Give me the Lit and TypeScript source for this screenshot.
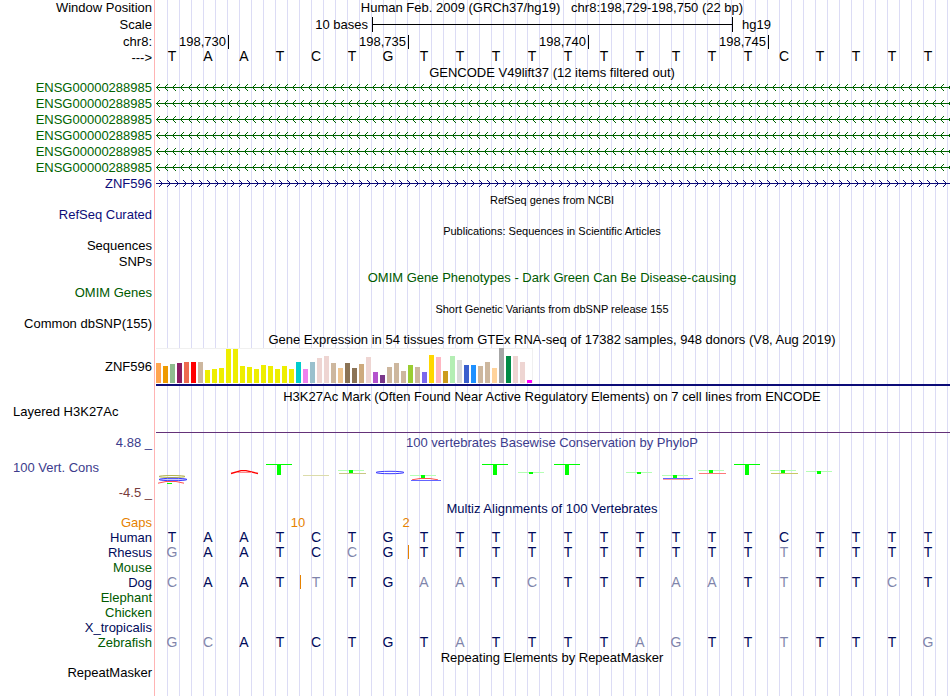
import { LitElement, html, css, svg, nothing } from 'lit';
import { customElement, property } from 'lit/decorators.js';
import { classMap } from 'lit/directives/class-map.js';

const HUMAN = 'TAATCTGTTTTTTTTTTCTTTT';

// lower case means the base differs from human
const SPECIES = [
  { name: 'Human', tone: 'navy', bases: HUMAN, gap: -1 },
  { name: 'Rhesus', tone: 'navy', bases: 'gAATCcGTTTTTTTTTTtTTTT', gap: 7 },
  { name: 'Mouse', tone: 'forest', bases: '', gap: -1 },
  { name: 'Dog', tone: 'navy', bases: 'cAATtTGaaTcTTTaaTtTTcT', gap: 4 },
  { name: 'Elephant', tone: 'forest', bases: '', gap: -1 },
  { name: 'Chicken', tone: 'forest', bases: '', gap: -1 },
  { name: 'X_tropicalis', tone: 'navy', bases: '', gap: -1 },
  { name: 'Zebrafish', tone: 'forest', bases: 'gcATCTGTaTTTTagTTtTTTg', gap: -1 },
];

const TISSUES: [string, number][] = [
  ['#ffa54f', 20], ['#ee9a00', 17], ['#8fbc8f', 19], ['#8b1c62', 20],
  ['#ee6a50', 21], ['#ff0000', 21], ['#cdb79e', 21], ['#eeee00', 13],
  ['#eeee00', 14], ['#eeee00', 15], ['#eeee00', 34], ['#eeee00', 34],
  ['#eeee00', 17], ['#eeee00', 16], ['#eeee00', 14], ['#eeee00', 18],
  ['#eeee00', 17], ['#eeee00', 14], ['#eeee00', 17], ['#eeee00', 14],
  ['#00cdcd', 21], ['#ee82ee', 14], ['#9ac0cd', 21], ['#eed5d2', 25],
  ['#eed5d2', 27], ['#cdb79e', 20], ['#eec591', 15], ['#8b7355', 20],
  ['#8b7355', 15], ['#cdaa7d', 19], ['#eed5d2', 26], ['#b452cd', 11],
  ['#7a378b', 8], ['#cdb79e', 16], ['#cdb79e', 20], ['#cdb79e', 12],
  ['#9acd32', 18], ['#cdb79e', 16], ['#7b68ee', 11], ['#ffd700', 28],
  ['#ffb6c1', 26], ['#cd9b1d', 12], ['#b4eeb4', 27], ['#d9d9d9', 23],
  ['#3a5fcd', 18], ['#1e90ff', 18], ['#cdb79e', 17], ['#cdb79e', 21],
  ['#ffd39b', 15], ['#a6a6a6', 35], ['#008b45', 27], ['#eed5d2', 27],
  ['#eed5d2', 21], ['#ff00ff', 3],
];

const stem = (y: number, h: number) => svg`
  <rect x="4" y=${y} width="26" height="1" fill="#b4ffb4" />
  <rect x="15" y=${y} width="4" height=${h} fill="#00ff00" />`;
const tall = svg`
  <rect x="4" y="24" width="26" height="1" fill="#00ff00" />
  <rect x="15" y="24" width="4" height="11" fill="#00ff00" />`;
const streak = (y: number, color: string, w = 27) => svg`
  <rect x="5" y=${y} width=${w} height="1" fill=${color} />`;

// conservation marks by base, y measured from the top of the plot
const CONSERVATION: Record<number, unknown> = {
  0: svg`
    <ellipse cx="18" cy="36.5" rx="13" ry="1" fill="none" stroke="#b4b450" />
    <ellipse cx="19" cy="39.5" rx="14" ry="1.2" fill="#c8c8ff" stroke="#3c3cff" />
    <path d="M4 43.2 L12 41.5 H22 L30 43.2" fill="none" stroke="#ff5050" />
    <rect x="13" y="43" width="5" height="1" fill="#00ff00" />`,
  2: svg`
    <path d="M5 33.5 L15 30.7 H20 L32 33.5" fill="none" stroke="#ff0000" stroke-width="1.3" />
    <path d="M11 32.5 H26" stroke="#ff8c8c" />`,
  3: tall,
  4: streak(35, '#dcdcaa', 26),
  5: svg`${stem(30, 3)}${streak(33, '#c8c882')}`,
  6: svg`<ellipse cx="20" cy="32.5" rx="14" ry="1.2" fill="none" stroke="#3c3cff" />`,
  7: svg`${stem(35, 3)}
    <path d="M6 39.8 L14 38.5 H24 L32 39.8" fill="none" stroke="#ff5050" />
    <path d="M5 40.5 H35" stroke="#6464ff" />`,
  9: tall,
  10: stem(32, 2),
  11: tall,
  13: stem(32, 2),
  14: svg`${stem(35, 3)}${streak(38, '#6464ff', 30)}${streak(39, '#ffa0a0')}`,
  15: svg`${stem(30, 3)}${streak(33, '#ff7878')}`,
  16: tall,
  17: svg`${stem(30, 3)}${streak(33, '#c8c864')}`,
  18: stem(31, 3),
};

@customElement('base-row')
class BaseRow extends LitElement {
  static styles = css`
    :host {
      display: grid;
      grid-template-columns: repeat(22, minmax(0, 1fr));
      padding-right: 4px;
      height: 15px;
      font-size: 14px;
      line-height: 15px;
      text-align: center;
    }

    .base {
      position: relative;
    }

    .changed {
      opacity: 0.5;
    }

    /* insertion mark on the boundary before a base */
    .gap::before {
      content: '';
      position: absolute;
      left: 2px;
      top: 0;
      width: 1px;
      height: 14px;
      background: #e68200;
    }
  `;

  @property() bases = '';
  @property({ type: Number }) gap = -1;

  render() {
    return [...this.bases].map((base, i) => html`
      <span class=${classMap({ base: true, gap: i === this.gap })}>
        <span class=${classMap({ changed: base !== base.toUpperCase() })}>${base.toUpperCase()}</span>
      </span>
    `);
  }
}

@customElement('strand-line')
class StrandLine extends LitElement {
  static styles = css`
    :host {
      display: block;
      height: 16px;
      padding-left: 2px;
    }

    svg {
      display: block;
      width: 100%;
      height: 16px;
    }
  `;

  @property({ type: Boolean }) reverse = false;

  render() {
    const arrow = [-3, -2, -1, 0, 1, 2, 3].map((dy) => {
      const x = this.reverse ? Math.abs(dy) : 6 - Math.abs(dy);
      return svg`<rect x=${x} y=${7 + dy} width="1" height="1" fill="currentColor" />`;
    });
    return html`
      <svg aria-hidden="true" shape-rendering="crispEdges">
        <pattern id="arrows" width="8" height="16" patternUnits="userSpaceOnUse">${arrow}</pattern>
        <rect y="7" width="100%" height="1" fill="currentColor" />
        <rect width="100%" height="16" fill="url(#arrows)" />
      </svg>
    `;
  }
}

@customElement('app-root')
class AppRoot extends LitElement {
  static styles = css`
    :host {
      display: block;
      min-height: 100vh;
      background:
        linear-gradient(to right, #ffb4b4 1px, #fff 1px) 154px 0 / 2px 100% no-repeat,
        linear-gradient(#fff, #fff) 0 0 / 154px 100% no-repeat,
        linear-gradient(to right, transparent calc(100% - 1px), #dcdcf5 0) 156px 0 / calc((100vw - 158px) / 66) 100% repeat-x,
        #fff;
      color: #000;
      font-family: 'Liberation Sans', Arial, Helvetica, sans-serif;
      font-size: 13px;
      line-height: 16px;
      overflow: hidden;
    }

    .row {
      display: grid;
      grid-template-columns: 152px minmax(0, 1fr);
      column-gap: 2px;
      min-height: 16px;
      white-space: nowrap;
    }

    .tight {
      min-height: 15px;
      height: 15px;
      line-height: 15px;
    }

    .label {
      text-align: right;
    }

    .title {
      text-align: center;
    }

    .position {
      white-space: pre;
    }

    .small {
      font-size: 11px;
      line-height: 17px;
    }

    .green {
      color: #006400;
    }

    .forest {
      color: #005a00;
    }

    .blue {
      color: #0c0c78;
    }

    .navy {
      color: #000a5a;
    }

    .violet {
      color: #3c3c8c;
    }

    .brown {
      color: #783c3c;
    }

    .orange {
      color: #e68200;
    }

    .ruler {
      min-height: 17px;
      line-height: 17px;
    }

    .sequence {
      line-height: 13px;
    }

    .cells {
      display: grid;
      grid-template-columns: repeat(22, minmax(0, 1fr));
      padding-right: 4px;
    }

    .scale {
      grid-column: 1 / 17;
      display: grid;
      grid-template-columns: subgrid;
      align-items: center;
    }

    .scale-text {
      grid-column: 1 / 7;
      padding-right: 2px;
      text-align: right;
    }

    .scale-bar {
      grid-column: 7 / 17;
      box-sizing: border-box;
      height: 15px;
      margin: 0 -3px 0 2px;
      border: solid #000;
      border-width: 0 1px;
      background: linear-gradient(#000, #000) 0 50% / 100% 1px no-repeat;
    }

    .assembly {
      grid-column: 17 / 20;
      padding-left: 12px;
    }

    .tick {
      box-sizing: border-box;
      height: 14px;
      margin: 2px -3px 0 0;
      padding-right: 2px;
      border-right: 1px solid #000;
      line-height: 14px;
      text-align: right;
    }

    .gtex {
      height: 38px;
      margin-bottom: 3px;
      line-height: 38px;
    }

    .expression {
      margin-left: 2px;
      border-bottom: 2px solid #0c0c78;
    }

    .bars {
      display: flex;
      align-items: flex-end;
      box-sizing: border-box;
      gap: 2px;
      width: max-content;
      height: 35px;
      padding-right: 1px;
      margin-bottom: 1px;
      background: #fff;
      box-shadow: inset 0 1px #f0f0f0, inset -1px 0 #f0f0f0;
    }

    .bar {
      width: 5px;
    }

    .left {
      padding-left: 13px;
      text-align: left;
    }

    .histone {
      height: 29px;
    }

    .baseline {
      height: 1px;
      margin: 28px 0 0 2px;
      background: #643278;
    }

    .plot {
      height: 66px;
      margin-top: 2px;
    }

    .axis {
      display: flex;
      flex-direction: column;
      justify-content: space-between;
    }

    .plot-title {
      height: 5px;
    }

    .logo {
      display: block;
      width: 100%;
      height: 60px;
      overflow: visible;
    }

    .alignments {
      margin-top: -1px;
    }
  `;

  private heading(text: string, tone = '') {
    return html`
      <div class="row tight">
        <span></span>
        <span class="title ${tone}">${text}</span>
      </div>
    `;
  }

  private track(label: string, tone = '', content: unknown = nothing) {
    return html`
      <div class="row">
        <span class="label ${tone}">${label}</span>
        <div class=${tone}>${content}</div>
      </div>
    `;
  }

  private ruler() {
    return html`
      <div class="row">
        <span class="label">Window Position</span>
        <span class="title position">Human Feb. 2009 (GRCh37/hg19)   chr8:198,729-198,750 (22 bp)</span>
      </div>
      <div class="row ruler">
        <span class="label">Scale</span>
        <div class="cells">
          <div class="scale">
            <span class="scale-text">10 bases</span>
            <span class="scale-bar"></span>
          </div>
          <span class="assembly">hg19</span>
        </div>
      </div>
      <div class="row ruler">
        <span class="label">chr8:</span>
        <div class="cells">
          <span class="tick" style="grid-column: 1 / 3">198,730</span>
          <span class="tick" style="grid-column: 6 / 8">198,735</span>
          <span class="tick" style="grid-column: 11 / 13">198,740</span>
          <span class="tick" style="grid-column: 16 / 18">198,745</span>
        </div>
      </div>
      <div class="row tight">
        <span class="label">---&gt;</span>
        <base-row class="sequence" .bases=${HUMAN}></base-row>
      </div>
    `;
  }

  private expression() {
    return html`
      <div class="row gtex">
        <span class="label">ZNF596</span>
        <div class="expression">
          <div class="bars">
            ${TISSUES.map(([color, height]) => html`
              <span class="bar" style="background:${color};height:${height}px"></span>
            `)}
          </div>
        </div>
      </div>
    `;
  }

  private conservation() {
    return html`
      <div class="row plot">
        <div class="axis">
          <span class="label violet">4.88 _</span>
          <span class="left violet">100 Vert. Cons</span>
          <span class="label brown">-4.5 _</span>
        </div>
        <div>
          <div class="title violet plot-title">100 vertebrates Basewise Conservation by PhyloP</div>
          <div class="cells">
            ${[...HUMAN].map((_, i) => html`
              <svg class="logo" aria-hidden="true">${CONSERVATION[i] ?? nothing}</svg>
            `)}
          </div>
        </div>
      </div>
    `;
  }

  private alignments() {
    return html`
      <div class="alignments">
        <div class="row tight">
          <span class="label orange">Gaps</span>
          <div class="cells title orange">
            <span style="grid-column: 4 / 6">10</span>
            <span style="grid-column: 7 / 9">2</span>
          </div>
        </div>
        ${SPECIES.map((s) => html`
          <div class="row tight">
            <span class="label ${s.tone}">${s.name}</span>
            <base-row class="navy" .bases=${s.bases} .gap=${s.gap}></base-row>
          </div>
        `)}
      </div>
    `;
  }

  render() {
    return html`
      ${this.ruler()}
      ${this.heading('GENCODE V49lift37 (12 items filtered out)')}
      ${Array.from({ length: 6 }, () =>
        this.track('ENSG00000288985', 'green', html`<strand-line reverse></strand-line>`))}
      ${this.track('ZNF596', 'blue', html`<strand-line></strand-line>`)}
      ${this.heading('RefSeq genes from NCBI', 'small')}
      ${this.track('RefSeq Curated', 'blue')}
      ${this.heading('Publications: Sequences in Scientific Articles', 'small')}
      ${this.track('Sequences')}
      ${this.track('SNPs')}
      ${this.heading('OMIM Gene Phenotypes - Dark Green Can Be Disease-causing', 'forest')}
      ${this.track('OMIM Genes', 'forest')}
      ${this.heading('Short Genetic Variants from dbSNP release 155', 'small')}
      ${this.track('Common dbSNP(155)')}
      <div class="row">
        <span></span>
        <span class="title">Gene Expression in 54 tissues from GTEx RNA-seq of 17382 samples, 948 donors (V8, Aug 2019)</span>
      </div>
      ${this.expression()}
      ${this.heading('H3K27Ac Mark (Often Found Near Active Regulatory Elements) on 7 cell lines from ENCODE')}
      <div class="row histone">
        <span class="left">Layered H3K27Ac</span>
        <div><div class="baseline"></div></div>
      </div>
      ${this.conservation()}
      ${this.heading('Multiz Alignments of 100 Vertebrates', 'navy')}
      ${this.alignments()}
      ${this.heading('Repeating Elements by RepeatMasker')}
      ${this.track('RepeatMasker')}
    `;
  }
}
